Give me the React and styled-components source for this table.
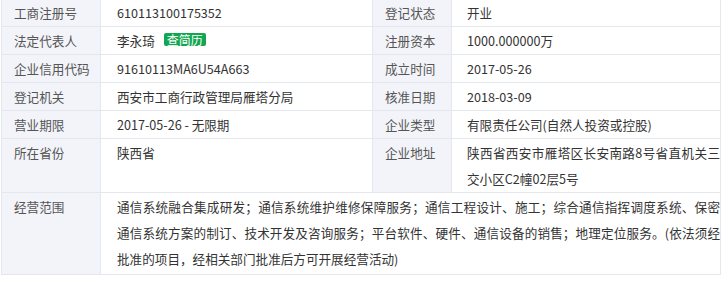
import { Fragment } from "react";
import styled, { createGlobalStyle } from "styled-components";

const GlobalStyle = createGlobalStyle`
  body {
    margin: 0;
    background: #fff;
    font-family: "Noto Sans CJK SC", "Microsoft YaHei", sans-serif;
  }
`;

// the table is scrolled up a little in the shot, so the top border is hidden
const Sheet = styled.div`
  display: grid;
  grid-template-columns: 99px 272px 79px 269px;
  margin: -2px 0 0 1px;
  width: 720px;
  box-sizing: border-box;
  border-left: 1px solid #e4e8ee;
  border-top: 1px solid #e4e8ee;
  font-size: 12.6px;
  line-height: 26px;
`;

const Cell = styled.div`
  box-sizing: border-box;
  border-right: 1px solid #e4e8ee;
  border-bottom: 1px solid #e4e8ee;
  padding: 1px 0 ${(p) => (p.$last ? 2 : 0)}px;
`;

const Label = styled(Cell)`
  background: #f2f4f9;
  color: #555;
  padding-left: 12px;
  white-space: nowrap;
`;

const Value = styled(Cell)`
  color: #333;
  padding-left: ${(p) => p.$pad || 16}px;
  grid-column: ${(p) => (p.$wide ? "2 / span 3" : "auto")};
  text-align: justify;
`;

const Badge = styled.span`
  display: inline-block;
  margin-left: 9px;
  padding: 0 3px;
  height: 13px;
  line-height: 13px;
  background: #12a651;
  color: #fff;
  font-size: 12px;
  border-radius: 2px;
  vertical-align: 1px;
`;

const rows = [
  ["工商注册号", "610113100175352", "登记状态", "开业"],
  ["法定代表人", "李永琦", "注册资本", "1000.000000万"],
  ["企业信用代码", "91610113MA6U54A663", "成立时间", "2017-05-26"],
  ["登记机关", "西安市工商行政管理局雁塔分局", "核准日期", "2018-03-09"],
  ["营业期限", "2017-05-26 - 无限期", "企业类型", "有限责任公司(自然人投资或控股)"],
  ["所在省份", "陕西省", "企业地址", "陕西省西安市雁塔区长安南路8号省直机关三交小区C2幢02层5号"],
];

const scope =
  "通信系统融合集成研发；通信系统维护维修保障服务；通信工程设计、施工；综合通信指挥调度系统、保密通信系统方案的制订、技术开发及咨询服务；平台软件、硬件、通信设备的销售；地理定位服务。(依法须经批准的项目，经相关部门批准后方可开展经营活动)";

export default function App() {
  return (
    <>
      <GlobalStyle />
      <Sheet>
        {rows.map(([l1, v1, l2, v2]) => (
          <Fragment key={l1}>
            <Label>{l1}</Label>
            <Value>
              {v1}
              {l1 === "法定代表人" && <Badge>查简历</Badge>}
            </Value>
            <Label>{l2}</Label>
            <Value $pad={15}>{v2}</Value>
          </Fragment>
        ))}
        <Label $last>经营范围</Label>
        <Value $last $wide>
          {scope}
        </Value>
      </Sheet>
    </>
  );
}
